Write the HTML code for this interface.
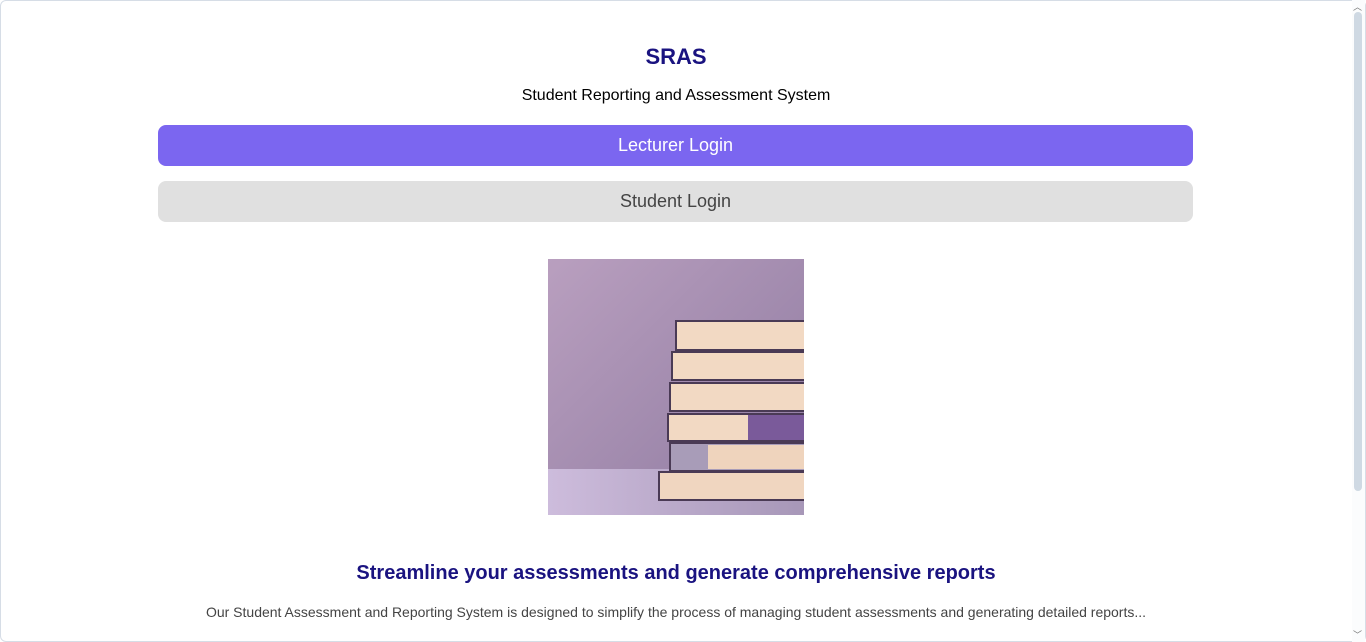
<!DOCTYPE html>
<html><head><meta charset="utf-8"><style>
html,body{margin:0;padding:0;}
body{width:1366px;height:642px;overflow:hidden;background:#fff;font-family:"Liberation Sans",Arial,sans-serif;position:relative;}
.frame{position:absolute;left:0;top:0;width:1364px;height:640px;border:1px solid #d6dde6;border-radius:6px;}
.sb{position:absolute;left:1352px;top:0;width:13px;height:642px;background:#fbfcfd;}
.thumb{position:absolute;left:1354px;top:12px;width:8px;height:479px;background:#cfd9e3;border-radius:4px;}
.arr{position:absolute;left:1353px;font-size:9px;color:#777;}
h1{position:absolute;left:0;width:1352px;top:44px;margin:0;text-align:center;font-size:22px;color:#1a1380;font-weight:bold;}
.sub{position:absolute;left:0;width:1352px;top:87px;text-align:center;font-size:16px;color:#000;}
.btn{position:absolute;left:158px;width:1035px;height:41px;border-radius:8px;text-align:center;line-height:41px;font-size:18px;}
.b1{top:125px;background:#7b66f0;color:#fff;}
.b2{top:181px;background:#e0e0e0;color:#444;}
.img{position:absolute;left:548px;top:259px;width:256px;height:256px;}
h2{position:absolute;left:0;width:1352px;top:562px;margin:0;text-align:center;font-size:20px;color:#1a1380;font-weight:bold;}
.p{position:absolute;left:0;width:1352px;top:604px;text-align:center;font-size:14px;color:#444;}
</style></head><body>
<div class="frame"></div>
<div class="sb"></div><div class="thumb"></div>
<div class="arr" style="top:0">︿</div><div class="arr" style="top:628px">﹀</div>
<h1>SRAS</h1>
<div class="sub">Student Reporting and Assessment System</div>
<div class="btn b1">Lecturer Login</div>
<div class="btn b2">Student Login</div>
<svg class="img" viewBox="0 0 256 256">
<defs><linearGradient id="bg" x1="0" y1="0" x2="1" y2="1"><stop offset="0" stop-color="#b99fbf"/><stop offset="1" stop-color="#8e7aa0"/></linearGradient>
<linearGradient id="fl" x1="0" y1="0" x2="1" y2="0"><stop offset="0" stop-color="#cdbcdc"/><stop offset="1" stop-color="#a797b8"/></linearGradient></defs>
<rect width="256" height="256" fill="url(#bg)"/>
<rect y="210" width="256" height="46" fill="url(#fl)"/>
<g stroke="#4a3a55" stroke-width="2">
<rect x="111" y="213" width="146" height="28" fill="#f0d6c0"/>
<rect x="122" y="184" width="135" height="28" fill="#a89cb8"/>
<rect x="160" y="186" width="97" height="24" fill="#efd4bd" stroke="none"/>
<rect x="120" y="155" width="137" height="27" fill="#f2d9c3"/>
<rect x="200" y="156" width="57" height="25" fill="#7a5a9a" stroke="none"/>
<rect x="122" y="124" width="135" height="28" fill="#f2d9c3"/>
<rect x="124" y="93" width="133" height="28" fill="#f2d9c3"/>
<rect x="128" y="62" width="129" height="29" fill="#f2d9c3"/>
</g>
</svg>
<h2>Streamline your assessments and generate comprehensive reports</h2>
<div class="p">Our Student Assessment and Reporting System is designed to simplify the process of managing student assessments and generating detailed reports...</div>
</body></html>
